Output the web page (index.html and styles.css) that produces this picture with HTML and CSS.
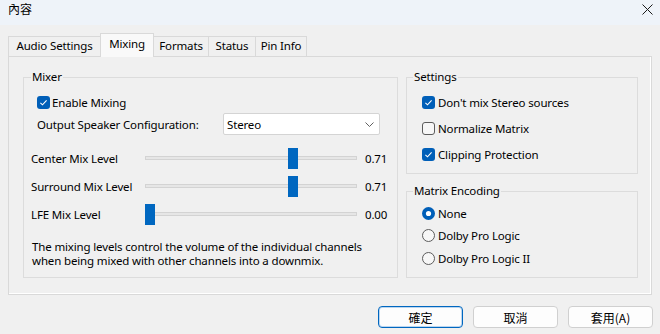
FILE: index.html
```html
<!DOCTYPE html>
<html lang="zh-Hant">
<head>
    <meta charset="UTF-8">
    <title>內容</title>
    <link rel="stylesheet" href="styles.css">
</head>
<body>
    <div class="titlebar">
        <span class="title">內容</span>
        <svg class="close" width="11" height="11" viewBox="0 0 11 11">
            <path d="M0.5 0.5 L10.5 10.5 M10.5 0.5 L0.5 10.5" stroke="#1a1a1a" stroke-width="1" fill="none"/>
        </svg>
    </div>

    <div class="tabs">
        <div class="tab" style="width:93px">Audio Settings</div>
        <div class="tab active" style="width:54px">Mixing</div>
        <div class="tab" style="width:56px">Formats</div>
        <div class="tab" style="width:48px">Status</div>
        <div class="tab" style="width:52px">Pin Info</div>
    </div>

    <div class="panel">
        <fieldset class="group mixer">
            <legend>Mixer</legend>
            <div class="check-row indent">
                <svg class="box" width="13" height="13" viewBox="0 0 13 13">
                    <rect width="13" height="13" rx="3" fill="#005fb8"/>
                    <path d="M3.4 6.8 L5.5 8.8 L9.6 4.4" stroke="#fff" stroke-width="1.1" fill="none"/>
                </svg>
                <span>Enable Mixing</span>
            </div>
            <div class="config-row indent">
                <span class="config-label">Output Speaker Configuration:</span>
                <div class="select">
                    <span>Stereo</span>
                    <svg width="9" height="5" viewBox="0 0 9 5">
                        <path d="M0.5 0.5 L4.5 4.5 L8.5 0.5" stroke="#606060" stroke-width="1" fill="none"/>
                    </svg>
                </div>
            </div>
            <div class="sliders">
                <div class="slider-row">
                    <span class="slider-label">Center Mix Level</span>
                    <input class="slider" type="range" min="0" max="1" step="0.01" value="0.71">
                    <span class="slider-value">0.71</span>
                </div>
                <div class="slider-row">
                    <span class="slider-label">Surround Mix Level</span>
                    <input class="slider" type="range" min="0" max="1" step="0.01" value="0.71">
                    <span class="slider-value">0.71</span>
                </div>
                <div class="slider-row">
                    <span class="slider-label">LFE Mix Level</span>
                    <input class="slider" type="range" min="0" max="1" step="0.01" value="0">
                    <span class="slider-value">0.00</span>
                </div>
            </div>
            <p class="desc">The mixing levels control the volume of the individual channels<br>when being mixed with other channels into a downmix.</p>
        </fieldset>

        <div class="side">
            <fieldset class="group settings">
                <legend>Settings</legend>
                <div class="opt-row">
                    <svg class="box" width="13" height="13" viewBox="0 0 13 13">
                        <rect width="13" height="13" rx="3" fill="#005fb8"/>
                        <path d="M3.4 6.8 L5.5 8.8 L9.6 4.4" stroke="#fff" stroke-width="1.1" fill="none"/>
                    </svg>
                    <span>Don't mix Stereo sources</span>
                </div>
                <div class="opt-row">
                    <svg class="box" width="13" height="13" viewBox="0 0 13 13">
                        <rect x="0.5" y="0.5" width="12" height="12" rx="2.5" fill="#f7f7f7" stroke="#5c5c5c"/>
                    </svg>
                    <span>Normalize Matrix</span>
                </div>
                <div class="opt-row">
                    <svg class="box" width="13" height="13" viewBox="0 0 13 13">
                        <rect width="13" height="13" rx="3" fill="#005fb8"/>
                        <path d="M3.4 6.8 L5.5 8.8 L9.6 4.4" stroke="#fff" stroke-width="1.1" fill="none"/>
                    </svg>
                    <span>Clipping Protection</span>
                </div>
            </fieldset>

            <fieldset class="group matrix">
                <legend>Matrix Encoding</legend>
                <div class="radio-row">
                    <svg class="box" width="13" height="13" viewBox="0 0 13 13">
                        <circle cx="6.5" cy="6.5" r="6.5" fill="#005fb8"/>
                        <circle cx="6.5" cy="6.5" r="2.6" fill="#fff"/>
                    </svg>
                    <span>None</span>
                </div>
                <div class="radio-row">
                    <svg class="box" width="13" height="13" viewBox="0 0 13 13">
                        <circle cx="6.5" cy="6.5" r="6" fill="#f7f7f7" stroke="#5c5c5c"/>
                    </svg>
                    <span>Dolby Pro Logic</span>
                </div>
                <div class="radio-row">
                    <svg class="box" width="13" height="13" viewBox="0 0 13 13">
                        <circle cx="6.5" cy="6.5" r="6" fill="#f7f7f7" stroke="#5c5c5c"/>
                    </svg>
                    <span>Dolby Pro Logic II</span>
                </div>
            </fieldset>
        </div>
    </div>

    <div class="footer">
        <button type="button" class="button default">確定</button>
        <button type="button" class="button">取消</button>
        <button type="button" class="button">套用(A)</button>
    </div>
</body>
</html>
```

FILE: styles.css
```css
body {
    font-family: "Segoe UI", "Noto Sans", "Noto Sans CJK TC", sans-serif;
    font-size: 11.5px;
    letter-spacing: -0.15px;
    color: #000;
    background-color: #f0f0f0;
    margin: 0;
    width: 660px;
    height: 334px;
    overflow: hidden;
}
.titlebar {
    height: 25px;
    background-color: #eef3f9;
    display: flex;
    justify-content: space-between;
    align-items: flex-start;
    padding: 2px 8px 0 8px;
    box-sizing: border-box;
}
.title {
    font-family: "Noto Sans CJK TC", sans-serif;
    font-size: 12px;
    letter-spacing: 0;
    line-height: 14px;
}
.close {
    margin-top: 2px;
    margin-right: -1px;
}
.tabs {
    display: flex;
    align-items: flex-end;
    height: 23px;
    margin: 8px 0 0 8px;
}
.tab {
    height: 20px;
    line-height: 18px;
    text-align: center;
    box-sizing: border-box;
    border: 1px solid #d9d9d9;
    border-bottom: none;
    margin-right: -1px;
    background-color: #f0f0f0;
}
.tab.active {
    height: 24px;
    line-height: 20px;
    margin-bottom: -1px;
    background-color: #f9f9f9;
    position: relative;
    z-index: 1;
}
.panel {
    margin: 0 8px;
    height: 239px;
    box-sizing: border-box;
    border: 1px solid #d9d9d9;
    box-shadow: inset -1px -1px 0 #fff;
    padding: 13px 13px 0 14px;
    display: flex;
    gap: 8px;
    align-items: flex-start;
}
.group {
    margin: 0;
    border: 1px solid #dcdcdc;
    min-width: 0;
}
.group legend {
    padding: 0 1px;
    line-height: 14px;
}
.mixer {
    width: 375px;
    box-sizing: border-box;
    padding: 8px 8px 9px 7px;
}
.indent {
    padding-left: 6px;
}
.check-row {
    height: 20px;
    display: flex;
    align-items: center;
}
.check-row .box {
    margin-right: 2px;
}
.config-row {
    height: 22px;
    margin-top: 1px;
    display: flex;
    align-items: center;
}
.config-label {
    width: 186px;
}
.select {
    width: 157px;
    height: 22px;
    box-sizing: border-box;
    border: 1px solid #d4d4d4;
    border-radius: 2px;
    background-color: #fff;
    display: flex;
    align-items: center;
    justify-content: space-between;
    padding: 0 5px 0 3px;
}
.sliders {
    margin-top: 9px;
}
.slider-row {
    height: 28px;
    display: flex;
    align-items: center;
}
.slider-label {
    width: 114px;
}
.slider {
    -webkit-appearance: none;
    appearance: none;
    width: 212px;
    height: 21px;
    margin: 0;
    background: transparent;
}
.slider::-webkit-slider-runnable-track {
    height: 4px;
    background-color: #e6e6e6;
    box-shadow: inset 0 0 0 1px #d3d3d3;
}
.slider::-webkit-slider-thumb {
    -webkit-appearance: none;
    width: 10px;
    height: 21px;
    margin-top: -8.5px;
    background-color: #0067c0;
    border: none;
    border-radius: 0;
}
.slider-value {
    margin-left: 8px;
}
.desc {
    margin: 11.5px 0 0 1px;
    line-height: 14px;
}
.side {
    width: 232px;
    display: flex;
    flex-direction: column;
}
.settings {
    padding: 5px 6px 6px 6px;
}
.opt-row {
    height: 26px;
    display: flex;
    align-items: center;
    padding-left: 9px;
}
.opt-row .box, .radio-row .box {
    margin-right: 3px;
}
.matrix {
    margin-top: 10px;
    padding: 4px 6px 7.5px 6px;
}
.radio-row {
    height: 22.5px;
    display: flex;
    align-items: center;
    padding-left: 9px;
}
.footer {
    display: flex;
    justify-content: flex-end;
    gap: 10px;
    padding: 11px 7px 0 0;
}
.button {
    width: 85px;
    height: 22px;
    padding: 0;
    font-family: "Noto Sans CJK TC", sans-serif;
    font-size: 12px;
    letter-spacing: 0;
    color: #000;
    background-color: #fdfdfd;
    border: 1px solid #d0d0d0;
    border-radius: 4px;
}
.button.default {
    border-color: #0067c0;
    box-shadow: inset 0 0 0 1px #bcd6ef;
}
```
